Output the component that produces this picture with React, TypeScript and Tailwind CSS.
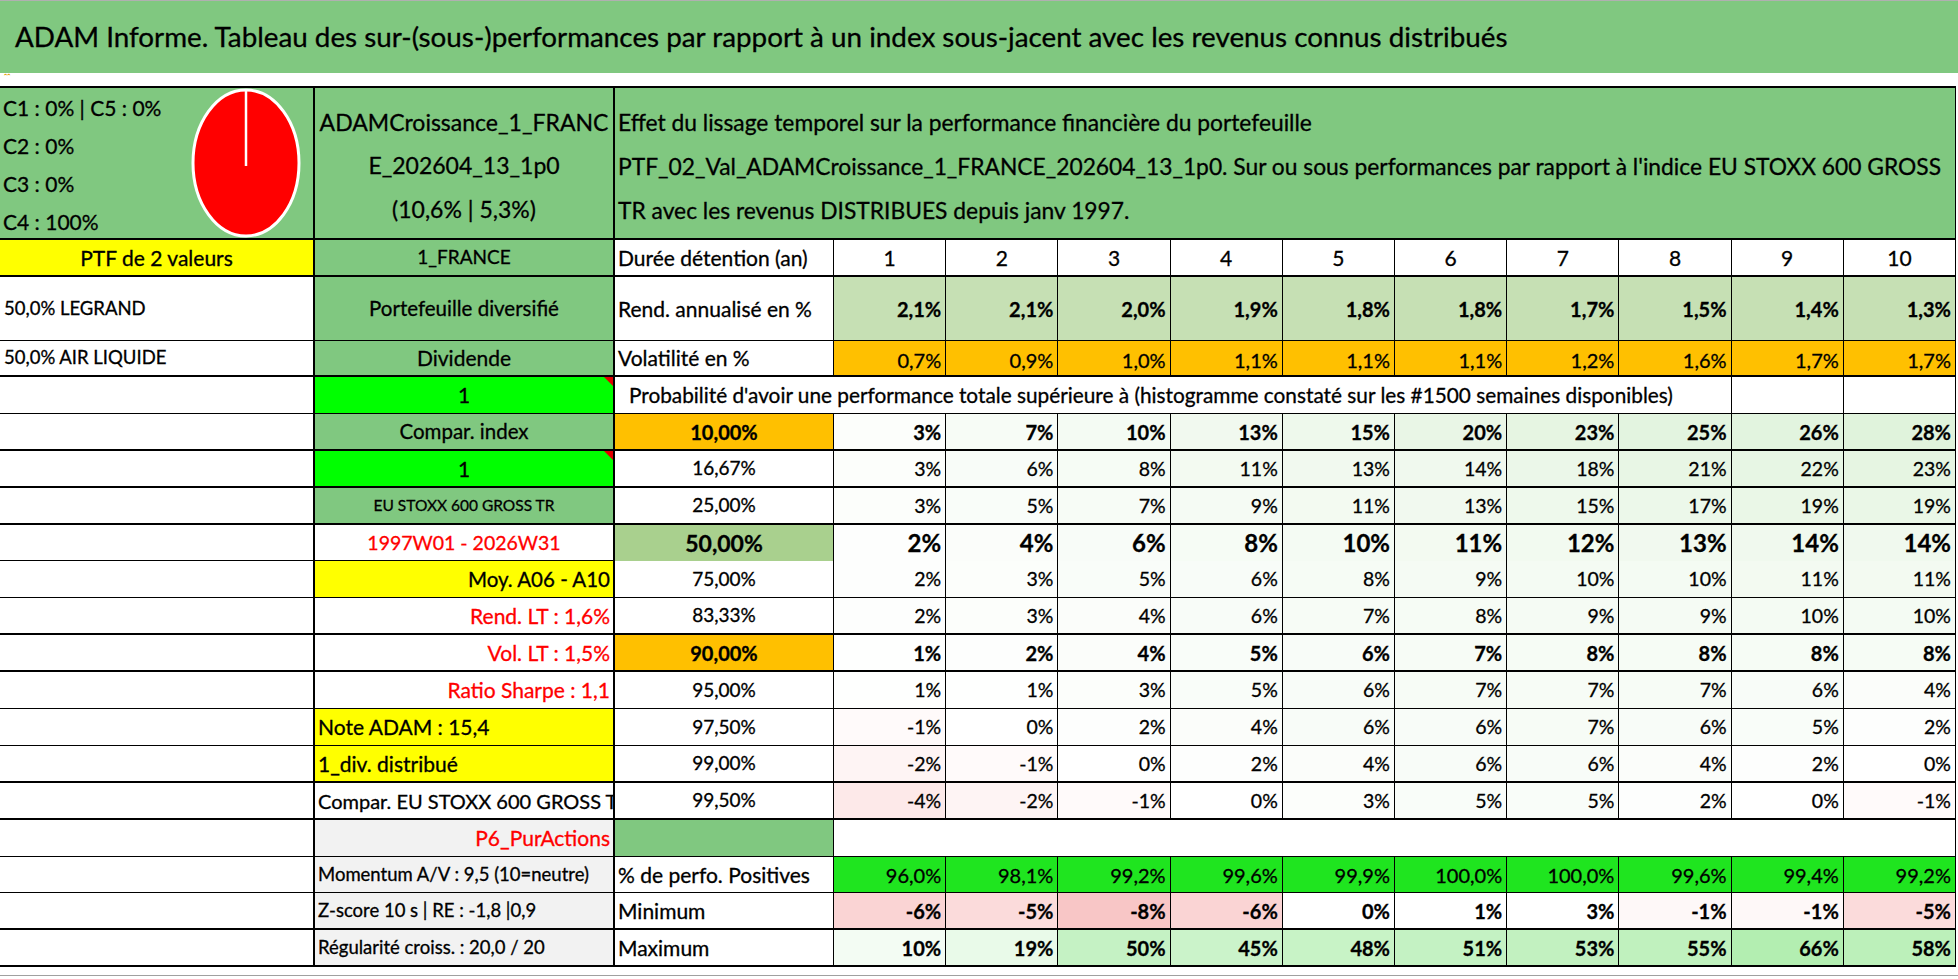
import React from "react";

const GRID = "grid grid-cols-[315px_300px_219px_repeat(10,minmax(0,1fr))]";

const mix = (hex: string, t: number) => {
  const k = Math.max(0, Math.min(1, t));
  const [r, g, b] = [1, 3, 5].map((i) => {
    const v = parseInt(hex.slice(i, i + 2), 16);
    return Math.round(255 + (v - 255) * k);
  });
  return `rgb(${r}, ${g}, ${b})`;
};

const probBg = (v: number) => (v < 0 ? mix("#fbd3d3", -v / 8) : mix("#e0f3dc", v / 28));
const minBg = (v: number) => (v < 0 ? mix("#f8c6c6", -v / 8) : "#ffffff");
const maxBg = (v: number) => mix("#b3eeb1", v / 66);

const rend = ["2,1%", "2,1%", "2,0%", "1,9%", "1,8%", "1,8%", "1,7%", "1,5%", "1,4%", "1,3%"];
const vol = ["0,7%", "0,9%", "1,0%", "1,1%", "1,1%", "1,1%", "1,2%", "1,6%", "1,7%", "1,7%"];
const positives = ["96,0%", "98,1%", "99,2%", "99,6%", "99,9%", "100,0%", "100,0%", "99,6%", "99,4%", "99,2%"];
const minimum = [-6, -5, -8, -6, 0, 1, 3, -1, -1, -5];
const maximum = [10, 19, 50, 45, 48, 51, 53, 55, 66, 58];

type Row = {
  b: React.ReactNode;
  bClass: string;
  level: string;
  levelClass: string;
  vals: number[];
  valClass: string;
  thick: boolean;
  h: string;
};

const Tri = () => (
  <span className="absolute right-0 top-0 h-0 w-0 border-l-[9px] border-t-[9px] border-l-transparent border-t-[#e00000]" />
);

const probRows: Row[] = [
  {
    b: "Compar. index",
    bClass: "bg-[#80c880] justify-center text-[20.5px]",
    level: "10,00%",
    levelClass: "bg-[#ffc000] font-bold text-[20px]",
    vals: [3, 7, 10, 13, 15, 20, 23, 25, 26, 28],
    valClass: "font-bold text-[20px]",
    thick: true,
    h: "h-[37px]",
  },
  {
    b: (
      <>
        1<Tri />
      </>
    ),
    bClass: "bg-[#00ff00] justify-center text-[21px] relative",
    level: "16,67%",
    levelClass: "text-[19px]",
    vals: [3, 6, 8, 11, 13, 14, 18, 21, 22, 23],
    valClass: "text-[19.5px]",
    thick: true,
    h: "h-[37px]",
  },
  {
    b: "EU STOXX 600 GROSS TR",
    bClass: "bg-[#80c880] justify-center text-[15.5px]",
    level: "25,00%",
    levelClass: "text-[19px]",
    vals: [3, 5, 7, 9, 11, 13, 15, 17, 19, 19],
    valClass: "text-[19.5px]",
    thick: true,
    h: "h-[37px]",
  },
  {
    b: "1997W01 - 2026W31",
    bClass: "justify-center text-[19.5px] text-[#ff0000]",
    level: "50,00%",
    levelClass: "bg-[#a9d08e] font-bold text-[23px]",
    vals: [2, 4, 6, 8, 10, 11, 12, 13, 14, 14],
    valClass: "font-bold text-[24px]",
    thick: false,
    h: "h-[36px]",
  },
  {
    b: "Moy. A06 - A10",
    bClass: "bg-[#ffff00] justify-end pr-[3px] text-[20.5px]",
    level: "75,00%",
    levelClass: "text-[19px]",
    vals: [2, 3, 5, 6, 8, 9, 10, 10, 11, 11],
    valClass: "text-[19.5px]",
    thick: false,
    h: "h-[37px]",
  },
  {
    b: "Rend. LT : 1,6%",
    bClass: "justify-end pr-[3px] text-[21px] text-[#ff0000]",
    level: "83,33%",
    levelClass: "text-[19px]",
    vals: [2, 3, 4, 6, 7, 8, 9, 9, 10, 10],
    valClass: "text-[19.5px]",
    thick: true,
    h: "h-[37px]",
  },
  {
    b: "Vol. LT : 1,5%",
    bClass: "justify-end pr-[3px] text-[21px] text-[#ff0000]",
    level: "90,00%",
    levelClass: "bg-[#ffc000] font-bold text-[20px]",
    vals: [1, 2, 4, 5, 6, 7, 8, 8, 8, 8],
    valClass: "font-bold text-[20px]",
    thick: true,
    h: "h-[37px]",
  },
  {
    b: "Ratio Sharpe : 1,1",
    bClass: "justify-end pr-[3px] text-[21px] text-[#ff0000]",
    level: "95,00%",
    levelClass: "text-[19px]",
    vals: [1, 1, 3, 5, 6, 7, 7, 7, 6, 4],
    valClass: "text-[19.5px]",
    thick: false,
    h: "h-[37px]",
  },
  {
    b: "Note ADAM : 15,4",
    bClass: "bg-[#ffff00] pl-[3px] text-[21px]",
    level: "97,50%",
    levelClass: "text-[19px]",
    vals: [-1, 0, 2, 4, 6, 6, 7, 6, 5, 2],
    valClass: "text-[19.5px]",
    thick: false,
    h: "h-[37px]",
  },
  {
    b: "1_div. distribué",
    bClass: "bg-[#ffff00] pl-[3px] text-[21px]",
    level: "99,00%",
    levelClass: "text-[19px]",
    vals: [-2, -1, 0, 2, 4, 6, 6, 4, 2, 0],
    valClass: "text-[19.5px]",
    thick: true,
    h: "h-[37px]",
  },
  {
    b: "Compar. EU STOXX 600 GROSS TR",
    bClass: "pl-[3px] text-[20px]",
    level: "99,50%",
    levelClass: "text-[19px]",
    vals: [-4, -2, -1, 0, 3, 5, 5, 2, 0, -1],
    valClass: "text-[19.5px]",
    thick: true,
    h: "h-[37px]",
  },
];

const grayRows = [
  { b: "Momentum A/V : 9,5 (10=neutre)", c: "% de perfo. Positives", thick: false, h: "h-[36px]" },
  { b: "Z-score 10 s | RE : -1,8 |0,9", c: "Minimum", thick: true, h: "h-[37px]" },
  { b: "Régularité croiss. : 20,0 / 20", c: "Maximum", thick: true, h: "h-[37px]" },
];

const cellA = "border-r-2 border-black flex items-center overflow-hidden whitespace-nowrap";
const cellB = "border-r-2 border-black flex items-center overflow-hidden whitespace-nowrap";
const cellC = "border-r border-black flex items-center overflow-hidden whitespace-nowrap";
const cellD = "border-r border-black flex items-center justify-end pr-[4px] whitespace-nowrap";

function Pie() {
  return (
    <svg width="112" height="152" viewBox="0 0 112 152" className="mr-[11px]">
      <ellipse cx="56" cy="76" rx="53" ry="73" fill="#ff0000" stroke="#ffffff" strokeWidth="3" />
      <line x1="56" y1="3" x2="56" y2="79" stroke="#ffffff" strokeWidth="2.5" />
    </svg>
  );
}

export default function App() {
  return (
    <div className="w-[1958px] h-[979px] bg-white font-[Lato,sans-serif] text-black overflow-hidden [-webkit-text-stroke:0.3px]">
      <div className="h-[73px] bg-[#80c880] border-t border-[#b0b0b0] flex items-center pl-[15px] text-[27.8px] leading-none whitespace-nowrap">
        ADAM Informe. Tableau des sur-(sous-)performances par rapport à un index sous-jacent avec les revenus connus distribués
      </div>
      <div className="h-[13px] flex items-start pl-[4px]">
        <span className="text-[8px] leading-none text-[#e0a000]">ˆˆ</span>
      </div>

      <div className="w-[1956px] border-t-2 border-black">
        {/* header block */}
        <div className={`${GRID} h-[152px] border-b-2 border-black`}>
          <div className={`${cellA} bg-[#80c880] justify-between`}>
            <div className="self-start pt-[1px] pl-[3px] text-[21px] leading-[38px]">
              <div>C1 : 0% | C5 : 0%</div>
              <div>C2 : 0%</div>
              <div>C3 : 0%</div>
              <div>C4 : 100%</div>
            </div>
            <Pie />
          </div>
          <div className={`${cellB} bg-[#80c880] flex-col justify-center pt-[6px] text-[23px] leading-[43.5px] text-center`}>
            <div>ADAMCroissance_1_FRANC</div>
            <div>E_202604_13_1p0</div>
            <div>(10,6% | 5,3%)</div>
          </div>
          <div className="col-span-11 bg-[#80c880] border-r border-black flex flex-col justify-center pt-[6px] pl-[3px] text-[22.8px] leading-[44px] whitespace-nowrap">
            <div>Effet du lissage temporel sur la performance financière du portefeuille</div>
            <div>
              PTF_02_Val_ADAMCroissance_1_FRANCE_202604_13_1p0. Sur ou sous performances par rapport à l'indice EU STOXX 600 GROSS
            </div>
            <div>TR avec les revenus DISTRIBUES depuis janv 1997.</div>
          </div>
        </div>

        {/* years */}
        <div className={`${GRID} h-[37px] border-b-2 border-black`}>
          <div className={`${cellA} bg-[#ffff00] justify-center text-[21px]`}>PTF de 2 valeurs</div>
          <div className={`${cellB} bg-[#80c880] justify-center text-[19px]`}>1_FRANCE</div>
          <div className={`${cellC} pl-[3px] text-[21px]`}>Durée détention (an)</div>
          {Array.from({ length: 10 }, (_, i) => (
            <div key={i} className="border-r border-black flex items-center justify-center text-[21px]">
              {i + 1}
            </div>
          ))}
        </div>

        {/* rendement */}
        <div className={`${GRID} h-[64px] border-b border-black`}>
          <div className={`${cellA} pl-[4px] text-[18.5px]`}>50,0% LEGRAND</div>
          <div className={`${cellB} bg-[#80c880] justify-center text-[20.5px]`}>Portefeuille diversifié</div>
          <div className={`${cellC} pl-[3px] text-[21px]`}>Rend. annualisé en %</div>
          {rend.map((v, i) => (
            <div key={i} className={`${cellD} bg-[#c6e0b4] font-bold text-[20px]`}>
              {v}
            </div>
          ))}
        </div>

        {/* volatilite */}
        <div className={`${GRID} h-[36px] border-b-2 border-black`}>
          <div className={`${cellA} pl-[4px] text-[18.5px]`}>50,0% AIR LIQUIDE</div>
          <div className={`${cellB} bg-[#80c880] justify-center text-[21px]`}>Dividende</div>
          <div className={`${cellC} pl-[3px] text-[21px]`}>Volatilité en %</div>
          {vol.map((v, i) => (
            <div key={i} className={`${cellD} bg-[#ffc000] pt-[4px] text-[20px]`}>
              {v}
            </div>
          ))}
        </div>

        {/* probabilite title */}
        <div className={`${GRID} h-[37px] border-b border-black`}>
          <div className={cellA} />
          <div className={`${cellB} bg-[#00ff00] justify-center text-[21px] relative`}>
            1
            <Tri />
          </div>
          <div className="col-span-9 border-r border-black flex items-center pl-[14px] text-[20.8px] whitespace-nowrap">
            Probabilité d'avoir une performance totale supérieure à (histogramme constaté sur les #1500 semaines disponibles)
          </div>
          <div className="border-r border-black" />
          <div className="border-r border-black" />
        </div>

        {probRows.map((r, ri) => (
          <div key={ri} className={`${GRID} ${r.h} ${r.thick ? "border-b-2" : "border-b"} border-black`}>
            <div className={cellA} />
            <div className={`${cellB} ${r.bClass}`}>{r.b}</div>
            <div className={`${cellC} justify-center ${r.levelClass}`}>{r.level}</div>
            {r.vals.map((v, i) => (
              <div key={i} className={`${cellD} ${r.valClass}`} style={{ background: probBg(v) }}>
                {v}%
              </div>
            ))}
          </div>
        ))}

        {/* P6 */}
        <div className={`${GRID} h-[37px] border-b border-black`}>
          <div className={cellA} />
          <div className={`${cellB} bg-[#f2f2f2] justify-end pr-[3px] text-[21px] text-[#ff0000]`}>P6_PurActions</div>
          <div className={`${cellC} bg-[#80c880]`} />
          <div className="col-span-10 border-r border-black bg-white" />
        </div>

        {grayRows.map((r, ri) => (
          <div key={ri} className={`${GRID} ${r.h} ${r.thick ? "border-b-2" : "border-b"} border-black`}>
            <div className={cellA} />
            <div className={`${cellB} bg-[#f2f2f2] pl-[3px] text-[18.5px]`}>{r.b}</div>
            <div className={`${cellC} pl-[3px] text-[21px]`}>{r.c}</div>
            {ri === 0 &&
              positives.map((v, i) => (
                <div key={i} className={`${cellD} bg-[#1fe51f] text-[20px]`}>
                  {v}
                </div>
              ))}
            {ri === 1 &&
              minimum.map((v, i) => (
                <div key={i} className={`${cellD} font-bold text-[20px]`} style={{ background: minBg(v) }}>
                  {v}%
                </div>
              ))}
            {ri === 2 &&
              maximum.map((v, i) => (
                <div key={i} className={`${cellD} font-bold text-[20px]`} style={{ background: maxBg(v) }}>
                  {v}%
                </div>
              ))}
          </div>
        ))}
      </div>
      <div className="mt-[8px] border-b border-[#a0a0a0]" />
    </div>
  );
}
